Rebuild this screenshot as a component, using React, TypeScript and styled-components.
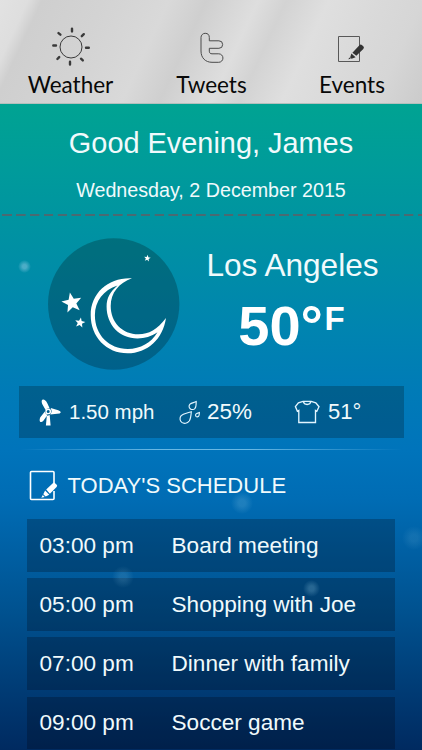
import React from "react";
import styled, { createGlobalStyle } from "styled-components";

const Global = createGlobalStyle`
  * { box-sizing: border-box; }
  body { margin: 0; background: #00285c; }
`;

const Screen = styled.main`
  position: relative;
  width: 422px;
  height: 750px;
  overflow: hidden;
  display: flex;
  flex-direction: column;
  color: #f0fafc;
  font-family: "Liberation Sans", Arial, sans-serif;
  white-space: nowrap;
  background: linear-gradient(180deg, #00a392 104px, #009b9b 170px, #0091a3 240px, #0084b0 330px, #007bb7 390px, #0074bb 450px, #006cb4 500px, #0060a4 550px, #005290 610px, #003e78 680px, #002a60 750px);
`;

const Glow = styled.i<{ $x: number; $y: number; $size: number; $alpha: number }>`
  position: absolute;
  left: ${(p) => p.$x - p.$size / 2}px;
  top: ${(p) => p.$y - p.$size / 2}px;
  width: ${(p) => p.$size}px;
  height: ${(p) => p.$size}px;
  border-radius: 50%;
  background: radial-gradient(circle closest-side, rgba(150, 205, 230, ${(p) => p.$alpha}) 30%, rgba(150, 205, 230, 0) 100%);
`;

const TabBar = styled.nav`
  flex: none;
  height: 104px;
  display: grid;
  grid-template-columns: 141px 141px 140px;
  border-bottom: 1px solid #b3c0bd;
  background: linear-gradient(115deg, #e2e2e2 0%, #dedede 6%, #cfcfcf 9%, #d3d3d3 22%, #d9d9d9 36%, #cfcfcf 44%, #d6d6d6 49%, #dedede 55%, #d3d3d3 61%, #dfdfdf 70%, #dadada 80%, #d6d6d6 90%, #cbcbcb 100%);
`;

const Tab = styled.a`
  display: flex;
  flex-direction: column;
  align-items: center;
  padding-top: 26px;
  color: #080808;
  font: 22.5px/28px Lato, sans-serif;
  svg { display: block; margin-bottom: 3px; }
`;

const Greeting = styled.header`
  height: 112px;
  flex: none;
  display: flex;
  flex-direction: column;
  align-items: center;
  padding-top: 22px;
`;

const Hello = styled.h1`
  margin: 0;
  font-size: 28.9px;
  line-height: 34px;
  font-weight: 400;
`;

const DateLine = styled.p`
  margin: 18px 0 0;
  font-size: 19.7px;
  line-height: 24px;
`;

const Dashes = styled.div`
  margin-top: auto;
  align-self: stretch;
  height: 2px;
  background: repeating-linear-gradient(90deg, transparent 0 2px, #4a6a72 2.5px 11.5px, transparent 12px 13.85px);
`;

const Current = styled.section`
  flex: none;
  height: 170px;
  display: flex;
  padding: 22px 0 0 48px;
`;

const NightIcon = styled.svg`
  flex: none;
  width: 132px;
  height: 132px;
`;

const Place = styled.div`
  flex: none;
  width: 225px;
  display: flex;
  flex-direction: column;
  align-items: center;
  font-size: 31.6px;
  line-height: 36px;
  padding-top: 9px;
`;

const Temperature = styled.strong`
  display: flex;
  align-items: flex-start;
  font-size: 56px;
  line-height: 64px;
  margin: 11px 2px 0 0;
  color: #fff;
`;

const Unit = styled.span`
  font-size: 33px;
  line-height: 38px;
  padding-top: 6px;
  margin-left: 1.5px;
`;

const Stats = styled.section`
  flex: none;
  height: 52px;
  margin: 0 18px 0 19px;
  display: grid;
  grid-template-columns: 159px 115px 1fr;
  align-items: center;
  background: rgba(0, 0, 0, 0.22);
`;

const Stat = styled.div<{ $size: number; $gap: number; $indent: number }>`
  display: flex;
  align-items: center;
  padding-left: ${(p) => p.$indent}px;
  gap: ${(p) => p.$gap}px;
  font-size: ${(p) => p.$size}px;
  line-height: 26px;
`;

const Divider = styled.hr`
  flex: none;
  width: 382px;
  height: 1px;
  border: 0;
  margin: 11px 20px 0;
  background: linear-gradient(90deg, transparent, rgba(160, 220, 250, 0.65) 35%, rgba(160, 220, 250, 0.65) 60%, transparent);
`;

const ScheduleTitle = styled.h2`
  flex: none;
  display: flex;
  align-items: center;
  gap: 8.5px;
  height: 31px;
  margin: 20px 0 0 29px;
  font-size: 22px;
  font-weight: 400;
`;

const Agenda = styled.ul`
  list-style: none;
  margin: 18px 27px 0 27px;
  padding: 0;
  display: flex;
  flex-direction: column;
  gap: 6.5px;
`;

const Entry = styled.li`
  flex: none;
  display: grid;
  grid-template-columns: 132px 1fr;
  align-items: center;
  height: 52.7px;
  padding: 1px 0 0 12.5px;
  font-size: 22.6px;
  background: rgba(0, 0, 8, 0.24);
`;

const entries = [
  ["03:00 pm", "Board meeting"],
  ["05:00 pm", "Shopping with Joe"],
  ["07:00 pm", "Dinner with family"],
  ["09:00 pm", "Soccer game"],
];

const SunIcon = () => (
  <svg width="42" height="42" viewBox="0 0 42 42" fill="none" stroke="#3a3a3a">
    <circle cx="21" cy="21" r="11" />
    <path strokeWidth="2.4" strokeLinecap="round" d="M22 2.600v2.800M33.800 8.200l-2 2M38.800 21.700h-2.800M32.800 34.400l-1.800-1.700M20 38.600v-2.800M7.400 33l1.800-1.900M3.300 19.500h2.700M8.500 7.100l1.900 1.600" />
  </svg>
);

const TweetIcon = () => (
  <svg width="42" height="42" viewBox="0 0 42 42" fill="none" stroke="#4a4a4a">
    <path d="M14.200 7.300A4.200 4.200 0 0 0 10 11.500V25c0 7 4.500 11.300 11 11.300h6.700a4.200 4.200 0 0 0 0-8.500H21c-1.800 0-2.700-1-2.700-2.600v-2.900h9.600a3.750 3.750 0 0 0 0-7.500h-9.600v-3.300a4.200 4.200 0 0 0-4.100-4.200z" />
  </svg>
);

const EventIcon = () => (
  <svg width="42" height="42" viewBox="0 0 42 42">
    <path d="M7.500 10.500h21v25h-21z" fill="none" stroke="#585858" />
    <path fill="#333" d="M21.400 26.800l7-7.600q1.300-1.200 2.700 0l1.200 1.100q1.300 1.300 0 2.600l-7 6.900zM20.400 27.500l4.200 3.800-4 1.500-1.500-1.400zM18.600 31.500l1.200 1.200-2.600.6z" />
  </svg>
);

const NoteIcon = () => (
  <svg width="30" height="31" viewBox="0 0 30 31">
    <path d="M25 13V2.500q0-1-1-1H2.500q-1 0-1 1v26q0 1 1 1H24q1 0 1-1V21" fill="none" stroke="#fff" strokeWidth="1.600" />
    <path fill="#fff" d="M17.200 19.500l6.600-6.300q1.200-1.200 2.300 0l1.600 1.600q1 1.100-.1 2.200l-6.700 6.700zM16.100 20.500l4.200 4.200-3.600 1.800-2.400-2.300zM13.800 25.100l1.900 1.800-3.400.9z" />
  </svg>
);

const TurbineIcon = () => (
  <svg width="23" height="27" viewBox="0 0 23 27" fill="#fff">
    <path d="M7.600 11L4.200 5Q2.800.9 5 .5q2.300-.1 4.300 3.700l2.400 5.200Q9 9 7.600 11zM12.700 8.900l7.500 2.400q2.900 1 2.500 2.100-.4 1.300-3.500 1.300l-7 .7q1.500-1.700 1.400-3.400zM6.900 12.600q.4 2.500 2.700 3.200l-4 5.700q-2.200 2.400-3.500 1.200-1-1.400.2-4.500zM8.800 17l2.900-1 .9 10.600H7.900z" />
    <circle cx="10.200" cy="12.400" r="2.200" fill="none" stroke="#fff" strokeWidth="1.400" />
  </svg>
);

const DropsIcon = () => (
  <svg width="22" height="25" viewBox="0 0 22 25" fill="none" stroke="#e2f5ff" strokeWidth="1.150">
    <path d="M12.300 11.800C12 16 11.900 18.500 10.200 21c-1.800 2.500-5.200 3-7.400 1.400-2.100-1.700-2.400-4.600-.6-6.700 2.200-2.500 6-2.300 10.100-3.900z" />
    <path d="M17.200 1.600c0 3 .1 5.100-1.200 6.700-1.200 1.400-3.400 1.600-4.800.4-1.400-1.100-1.500-3.100-.2-4.500 1.500-1.600 3.900-1.400 6.200-2.600z" />
    <path d="M20.400 12.600c0 1.900 0 2.900-.8 3.700-.8.700-1.900.7-2.600 0-.6-.7-.6-1.700.1-2.400.9-.8 1.900-.6 3.300-1.300z" />
  </svg>
);

const ShirtIcon = () => (
  <svg width="26" height="24" viewBox="0 0 26 24" fill="none" stroke="#e2f5ff" strokeWidth="1.350">
    <path d="M9 1.400h8.200l4.600 1.500 3.200 3.800-2.200 4.600-1.300-.8V22.500H4.800V10.500l-1.400.8L1.400 6.500l3-3.600zM9.400 1.500q.4 3 3.700 3t3.700-3" />
  </svg>
);

const starPoints = (cx: number, cy: number, r: number, turn: number) =>
  Array.from({ length: 10 }, (_, i) => {
    const radius = i % 2 ? r * 0.42 : r;
    const angle = ((i * 36 + turn - 90) * Math.PI) / 180;
    return `${(cx + radius * Math.cos(angle)).toFixed(2)},${(cy + radius * Math.sin(angle)).toFixed(2)}`;
  }).join(" ");

export default function App() {
  return (
    <Screen>
      <Global />
      <Glow $x={24} $y={266} $size={13} $alpha={0.5} />
      <Glow $x={242} $y={503} $size={22} $alpha={0.2} />
      <Glow $x={414} $y={538} $size={24} $alpha={0.12} />
      <TabBar>
        <Tab><SunIcon />Weather</Tab>
        <Tab><TweetIcon />Tweets</Tab>
        <Tab><EventIcon />Events</Tab>
      </TabBar>
      <Greeting>
        <Hello>Good Evening, James</Hello>
        <DateLine>Wednesday, 2 December 2015</DateLine>
        <Dashes />
      </Greeting>
      <Current>
        <NightIcon viewBox="0 0 132 132" fill="#fff">
          <circle cx="65.700" cy="66" r="65.700" fill="#000" fillOpacity=".23" />
          <path fillRule="evenodd" d="M84 40.200C61 39 42.700 54.500 42.700 77C42.700 99 58.500 115.300 79.500 115.300C99.500 115.300 115 101 118 80C109 91.500 101 96.300 90.500 96.300C74 96.300 62.700 84 62.700 68C62.700 54.500 71 45 84 40.200ZM69.500 47.500C62 54 58.600 60 58.600 68.500C58.600 87 71.500 100.400 89.500 100.400C97 100.400 103 98.500 109.500 94.300C103 105 92.500 111 79.800 111C61 111 46.900 97 46.900 77.300C46.900 63 55.500 52 69.500 47.500Z" />
          <polygon points={starPoints(23.9, 64.9, 10.6, -11)} />
          <polygon points={starPoints(32, 84.7, 5.4, 10)} />
          <polygon points={starPoints(99.3, 20.3, 3.5, 8)} />
        </NightIcon>
        <Place>
          Los Angeles
          <Temperature>50°<Unit>F</Unit></Temperature>
        </Place>
      </Current>
      <Stats>
        <Stat $size={20.5} $gap={8} $indent={19}><TurbineIcon />1.50 mph</Stat>
        <Stat $size={22.4} $gap={6} $indent={1}><DropsIcon />25%</Stat>
        <Stat $size={22} $gap={8} $indent={1}><ShirtIcon />51°</Stat>
      </Stats>
      <Divider />
      <ScheduleTitle><NoteIcon />TODAY'S SCHEDULE</ScheduleTitle>
      <Agenda>
        {entries.map(([time, title]) => (
          <Entry key={time}><span>{time}</span><span>{title}</span></Entry>
        ))}
      </Agenda>
      <Glow $x={123} $y={577} $size={22} $alpha={0.16} />
      <Glow $x={311} $y={588} $size={17} $alpha={0.26} />
    </Screen>
  );
}
